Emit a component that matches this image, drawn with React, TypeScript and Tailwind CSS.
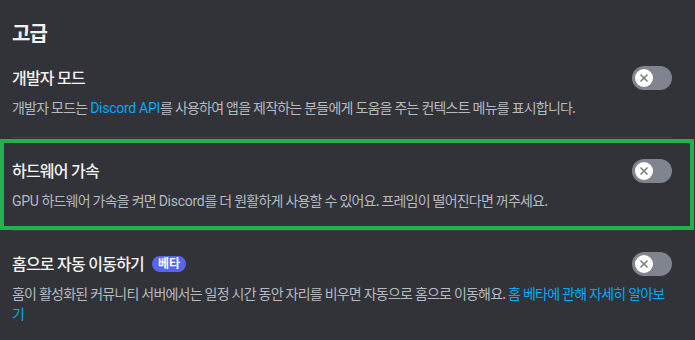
import { X } from "lucide-react";

type Setting = {
  title: string;
  beta?: boolean;
  desc: React.ReactNode;
};

// 영문 구간은 좁은 글꼴로
const Latin = ({ children, link }: { children: React.ReactNode; link?: boolean }) => (
  <span
    className={`tracking-[-0.02em] ${link ? "text-[#00a8fc]" : ""}`}
    style={{ fontFamily: 'Roboto, "Noto Sans CJK KR", sans-serif' }}
  >
    {children}
  </span>
);

const settings: Setting[] = [
  {
    title: "개발자 모드",
    desc: (
      <>
        개발자 모드는 <Latin link>Discord API</Latin>를 사용하여 앱을 제작하는 분들에게 도움을 주는 컨텍스트 메뉴를 표시합니다.
      </>
    ),
  },
  {
    title: "하드웨어 가속",
    desc: (
      <>
        <Latin>GPU</Latin> 하드웨어 가속을 켜면 <Latin>Discord</Latin>를 더 원활하게 사용할 수 있어요. 프레임이 떨어진다면 꺼주세요.
      </>
    ),
  },
  {
    title: "홈으로 자동 이동하기",
    beta: true,
    desc: (
      <>
        홈이 활성화된 커뮤니티 서버에서는 일정 시간 동안 자리를 비우면 자동으로 홈으로 이동해요.{" "}
        <span className="text-[#00a8fc]">
          홈 베타에 관해 자세히 알아보
          <br />기
        </span>
      </>
    ),
  },
];

// 꺼진 상태의 토글
const Toggle = () => (
  <div className="flex h-6 w-10 shrink-0 items-center rounded-full bg-[#80848e] px-[3px]">
    <div className="flex h-[18px] w-[18px] items-center justify-center rounded-full bg-white">
      <X size={12} strokeWidth={3.5} className="text-[#80848e]" />
    </div>
  </div>
);

const SettingItem = ({ item, last }: { item: Setting; last: boolean }) => (
  <div className={last ? "pt-[21px]" : "pt-[21px] border-b border-[#3f4147] pb-[19px]"}>
    <div className="flex h-6 items-center justify-between">
      <div className="flex items-center gap-2">
        <span className="text-[16px] font-medium text-[#f2f3f5]">{item.title}</span>
        {item.beta && (
          <span className="flex h-4 w-[34px] items-center justify-center rounded-full bg-[#5865f2] text-[12px] font-bold tracking-normal text-white">
            베타
          </span>
        )}
      </div>
      <Toggle />
    </div>
    <p className="mt-2 text-[14px] leading-5 text-[#b5bac1]">{item.desc}</p>
  </div>
);

export default function App() {
  return (
    <div
      className="relative h-[340px] w-[695px] overflow-hidden bg-[#313338] pl-3 pr-[23px] pt-[22px] tracking-[-0.05em]"
      style={{ fontFamily: '"Noto Sans", "Noto Sans CJK KR", sans-serif' }}
    >
      <h2 className="h-6 text-[20px] font-semibold leading-6 text-[#f2f3f5]">고급</h2>
      <div className="-mt-[1px]">
        {settings.map((s, i) => (
          <SettingItem key={s.title} item={s} last={i === settings.length - 1} />
        ))}
      </div>

      {/* 강조 박스 */}
      <div className="pointer-events-none absolute left-0 top-[139px] h-[91px] w-[694px] border-4 border-[#22b14c]" />
    </div>
  );
}
